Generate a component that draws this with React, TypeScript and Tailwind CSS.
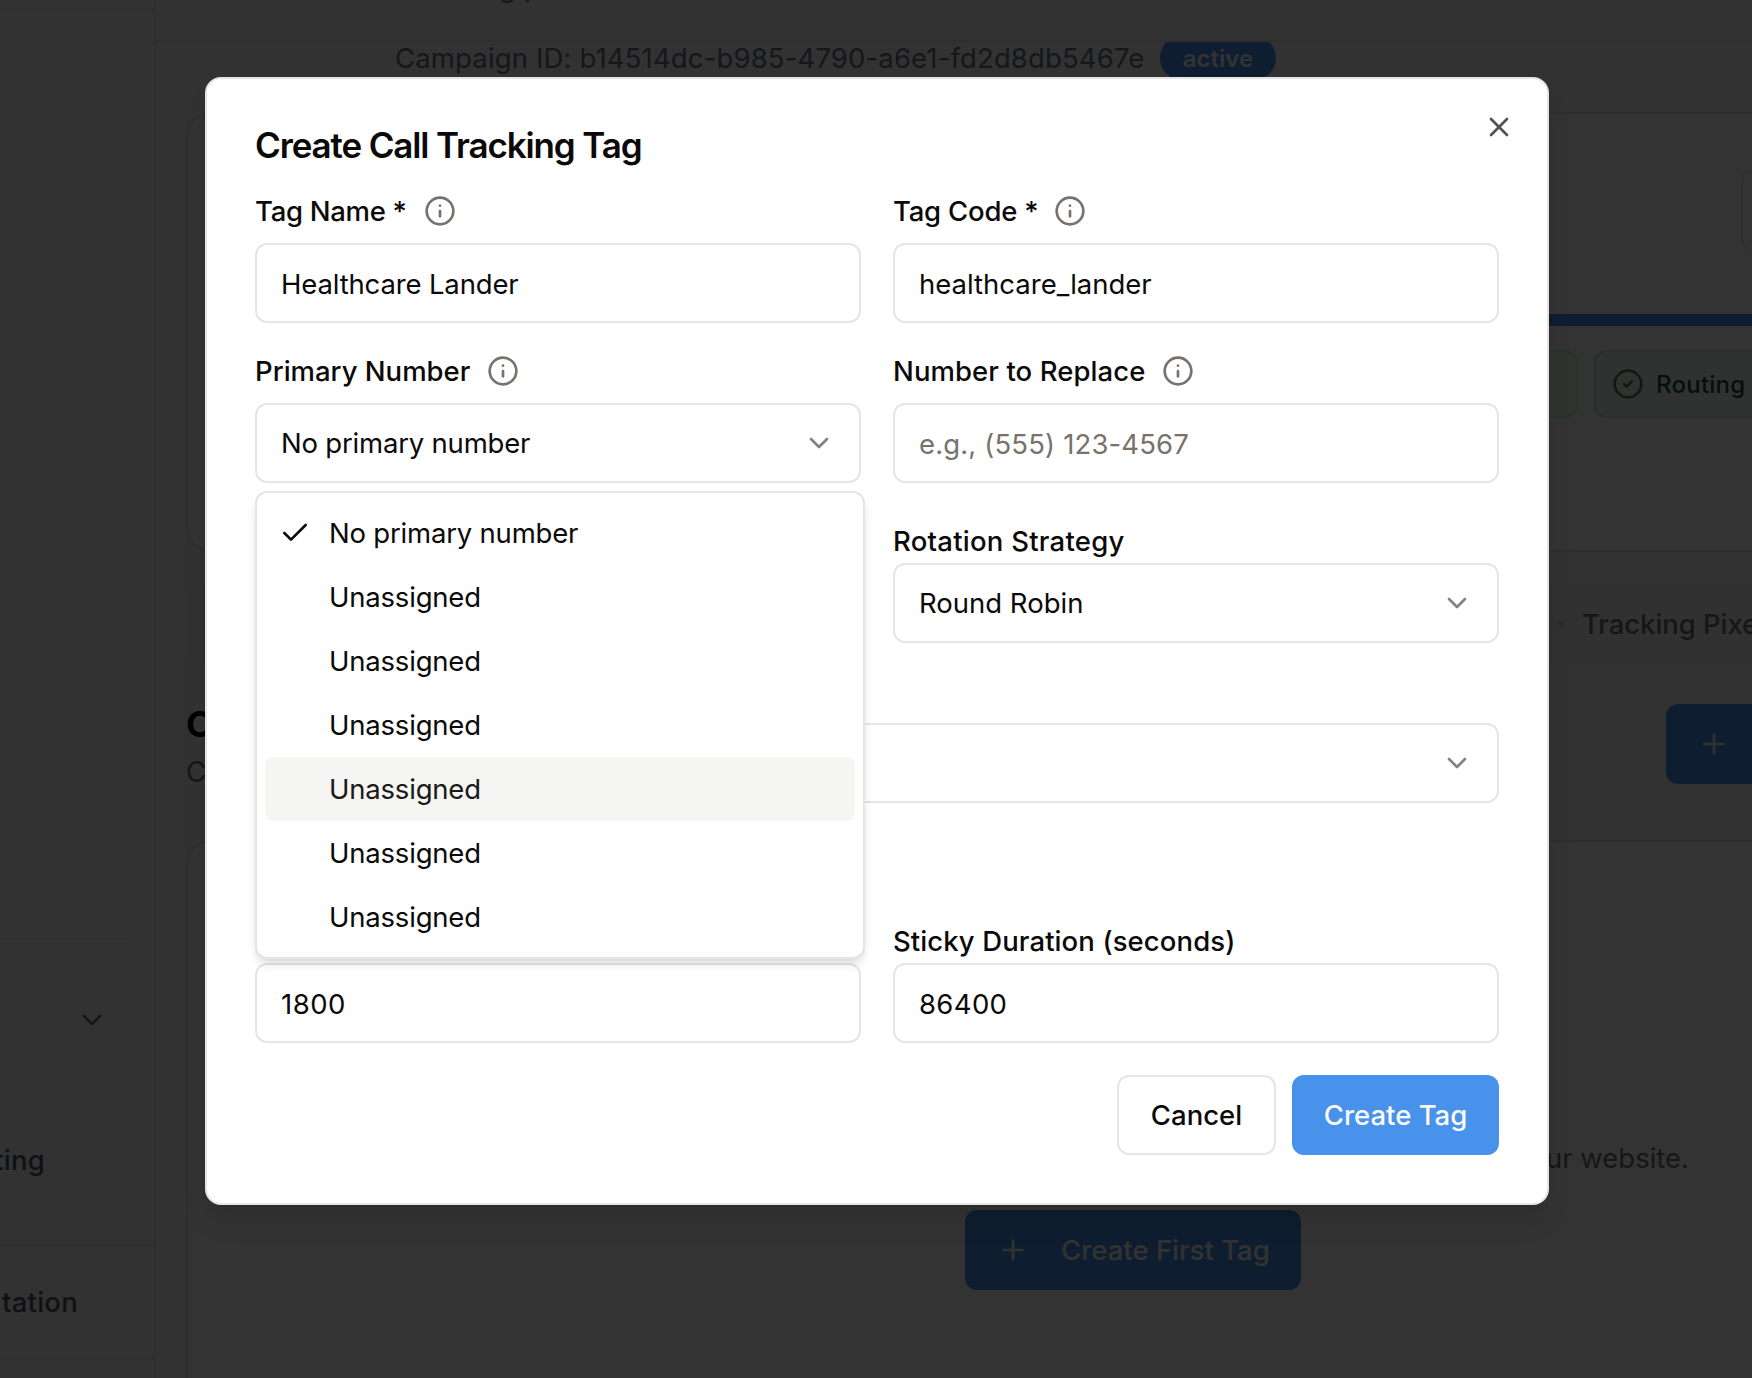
import type { ReactNode } from "react";
import { Check, ChevronDown, CircleCheck, Info, MousePointer2, Plus, X } from "lucide-react";

const fieldBox =
  "flex h-20 w-full items-center rounded-xl border-2 border-[#e5e5e5] bg-white px-6 text-[27.5px]";

function InfoLabel({ children, gap }: { children: ReactNode; gap: string }) {
  return (
    <div className={`flex h-8 items-center ${gap}`}>
      <span className="pt-0.5 text-[27.5px] font-medium">{children}</span>
      <Info size={32} className="shrink-0 text-[#78716c]" />
    </div>
  );
}

function PlainLabel({ children }: { children?: ReactNode }) {
  return <div className="flex h-12 items-center pt-1.5 text-[27.5px] font-medium">{children}</div>;
}

function InputBox({ children }: { children: ReactNode }) {
  return <div className={`${fieldBox} pt-1`}>{children}</div>;
}

function SelectBox({ children }: { children?: ReactNode }) {
  return (
    <div className={`${fieldBox} justify-between`}>
      <span className="pt-0.5 whitespace-nowrap">{children}</span>
      <ChevronDown size={32} className="opacity-50" />
    </div>
  );
}

const options = [
  { id: 0, label: "No primary number", selected: true, active: false },
  { id: 1, label: "Unassigned", selected: false, active: false },
  { id: 2, label: "Unassigned", selected: false, active: false },
  { id: 3, label: "Unassigned", selected: false, active: false },
  { id: 4, label: "Unassigned", selected: false, active: true },
  { id: 5, label: "Unassigned", selected: false, active: false },
  { id: 6, label: "Unassigned", selected: false, active: false },
];

function OptionsMenu() {
  return (
    <div className="absolute top-[88px] left-0 z-10 w-[610px] rounded-xl border-2 border-[#e5e5e5] bg-white p-2 shadow-[0_8px_12px_-2px_rgba(0,0,0,0.1),0_4px_8px_-4px_rgba(0,0,0,0.1)]">
      {options.map((o) => (
        <div
          key={o.id}
          className={`relative flex h-16 items-center rounded-lg pl-16 text-[27.5px] ${
            o.active ? "bg-[#f5f5f4] text-[#1c1917]" : ""
          }`}
        >
          {o.selected && <Check size={32} className="absolute left-3.5" />}
          <span className={`pt-0.5 ${o.selected ? "tracking-[-0.2px]" : "tracking-[-0.2px]"}`}>{o.label}</span>
        </div>
      ))}
    </div>
  );
}

function Sidebar() {
  return (
    <aside className="flex h-full w-[156px] shrink-0 flex-col border-r-2 border-[#e5e5e5] text-[27.5px] font-medium tracking-[0.25px] text-[#4b5563]">
      <div className="h-[10px] shrink-0 border-b-2 border-[#e5e5e5]" />
      <div className="mr-[22px] h-[930px] shrink-0 border-b-2 border-[#f0f0f0]" />
      <div className="flex h-[160px] shrink-0 items-center justify-end pr-[46px]">
        <ChevronDown size={32} className="text-[#78716c]" />
      </div>
      <div className="flex h-[146px] shrink-0 items-start justify-end border-b-2 border-[#e5e5e5] pt-10 pr-[109px] leading-[40px]">
        ting
      </div>
      <div className="flex h-[114px] shrink-0 items-center justify-end border-b-2 border-[#e5e5e5] pt-0.5 pr-[76px]">
        tation
      </div>
    </aside>
  );
}

function Backdrop() {
  return (
    <div className="flex h-full w-full bg-[#fafafa]">
      <Sidebar />
      <main className="flex min-w-0 flex-1 flex-col">
        <header className="flex h-[42px] shrink-0 items-start overflow-hidden border-b-2 border-[#e5e5e5] pl-[343px] text-[28px] leading-10 text-[#6b7280]">
          <span className="mt-[-33px] whitespace-pre">g p</span>
        </header>

        <div className="flex h-[70px] shrink-0 items-start overflow-hidden pl-[239px]">
          <div className="mt-[-6px] flex h-11 items-center">
            <span className="w-[765px] pt-0.5 text-[27.5px] whitespace-nowrap tracking-[0.145px] text-[#6b7280]">
              Campaign ID: b14514dc-b985-4790-a6e1-fd2d8db5467e
            </span>
            <span className="flex h-11 w-[116px] items-center justify-center rounded-full bg-[#4892ec] pt-0.5 text-2xl font-semibold text-[#fafaf9]">
              active
            </span>
          </div>
        </div>

        <div className="flex min-h-0 flex-1 flex-col pl-[30px]">
          <section className="flex h-[440px] shrink-0 flex-col items-end rounded-l-3xl border-2 border-r-0 border-[#e7e5e4] bg-white">
            <div className="mt-14 h-20 w-[11px] rounded-l-xl border-2 border-r-0 border-[#e5e5e5]" />
            <div className="mt-16 h-3 w-[1500px] rounded-l-full bg-[#4892ec]" />
            <div className="mt-6 flex h-[68px] gap-4">
              <div className="w-[200px] rounded-xl border-2 border-[#bbf7d0] bg-[#f0fdf4] opacity-80" />
              <div className="flex w-[158px] items-center gap-3 rounded-l-xl border-2 border-r-0 border-[#bbe7c8] bg-[#f0f8f3] pl-4">
                <CircleCheck size={32} className="text-[#3f8f4f]" />
                <span className="pt-0.5 text-2xl font-medium tracking-[0.25px] text-[#14532d]">Routing</span>
              </div>
            </div>
          </section>

          <div className="mt-8 flex h-20 shrink-0 items-center justify-end gap-[18px] rounded-l-xl bg-[#f5f5f4] text-[27.5px] font-medium text-[#78716c]">
            <MousePointer2 size={6} />
            <span className="w-[170px] overflow-hidden pt-0.5 tracking-[-0.07px] whitespace-nowrap">Tracking Pixel</span>
          </div>

          <div className="mt-10 flex h-20 shrink-0 justify-between">
            <div className="mt-[-2px]">
              <h2 className="text-4xl leading-[44px] font-bold text-black">C</h2>
              <p className="mt-1.5 text-[28px] leading-10 text-[#78716c]">C</p>
            </div>
            <div className="flex h-20 w-[86px] items-center rounded-l-xl bg-[#4892ec] pl-8 text-[#fafaf9]">
              <Plus size={32} />
            </div>
          </div>

          <section className="mt-14 flex min-h-0 flex-1 flex-col rounded-tl-3xl border-2 border-r-0 border-b-0 border-[#e7e5e4] bg-white">
            <p className="mt-[296px] pr-[63px] text-right text-[27.5px] leading-10 text-[#78716c]">
              ur website.
            </p>
            <div className="mt-8 ml-[777px] flex h-20 w-[336px] shrink-0 items-center rounded-xl bg-[#4892ec] pl-8 text-[27.5px] font-medium text-[#fafaf9]">
              <Plus size={32} />
              <span className="ml-8 pt-0.5">Create First Tag</span>
            </div>
          </section>
        </div>
      </main>
    </div>
  );
}

function TagDialog() {
  return (
    <div
      role="dialog"
      className="relative h-[1128px] w-[1344px] rounded-2xl border-2 border-[#e5e5e5] bg-white px-12 pt-12 text-[#0c0a09] shadow-[0_20px_30px_-6px_rgba(0,0,0,0.1),0_8px_12px_-8px_rgba(0,0,0,0.1)]"
    >
      <X size={32} className="absolute top-8 right-8 opacity-70" />
      <h1 className="text-[35px] leading-9 font-semibold tracking-[-1.13px]">Create Call Tracking Tag</h1>

      <div className="mt-8 grid grid-cols-2 gap-8">
        <div className="space-y-4">
          <InfoLabel gap="gap-[17px]">
            <span className="tracking-[-0.3px]">Tag Name *</span>
          </InfoLabel>
          <InputBox>
            <span className="tracking-[-0.15px]">Healthcare Lander</span>
          </InputBox>
        </div>
        <div className="space-y-4">
          <InfoLabel gap="gap-4">
            <span className="tracking-[-0.22px]">Tag Code *</span>
          </InfoLabel>
          <InputBox>healthcare_lander</InputBox>
        </div>

        <div className="space-y-4">
          <InfoLabel gap="gap-[17px]">Primary Number</InfoLabel>
          <div className="relative">
            <SelectBox>
              <span className="tracking-[-0.2px]">No primary number</span>
            </SelectBox>
            <OptionsMenu />
          </div>
        </div>
        <div className="space-y-4">
          <InfoLabel gap="gap-[17px]">
            <span className="tracking-[0.08px]">Number to Replace</span>
          </InfoLabel>
          <InputBox>
            <span className="tracking-[0.15px] text-[#78716c]">e.g., (555) 123-4567</span>
          </InputBox>
        </div>

        <div />
        <div>
          <PlainLabel>
            <span className="tracking-[0.25px]">Rotation Strategy</span>
          </PlainLabel>
          <SelectBox>Round Robin</SelectBox>
        </div>

        <div className="col-span-2">
          <PlainLabel />
          <SelectBox />
        </div>

        <div className="col-span-2 h-12" />

        <div>
          <PlainLabel />
          <InputBox>
            <span className="tracking-[0.5px]">1800</span>
          </InputBox>
        </div>
        <div>
          <PlainLabel>
            <span className="tracking-[0.1px]">Sticky Duration (seconds)</span>
          </PlainLabel>
          <InputBox>
            <span className="tracking-[0.35px]">86400</span>
          </InputBox>
        </div>
      </div>

      <div className="mt-8 flex justify-end gap-4 text-[27.5px] font-medium">
        <button className="h-20 w-[159px] rounded-xl border-2 border-[#e5e5e5] pt-0.5">Cancel</button>
        <button className="h-20 w-[207px] rounded-xl bg-[#4892ec] pt-0.5 text-[#fafaf9]">Create Tag</button>
      </div>
    </div>
  );
}

export default function App() {
  return (
    <div className="relative h-[1378px] w-[1752px] overflow-hidden font-['Inter',sans-serif]">
      <Backdrop />
      <div className="absolute inset-0 flex justify-center bg-black/80 pt-[77px]">
        <div className="ml-0.5">
          <TagDialog />
        </div>
      </div>
    </div>
  );
}
